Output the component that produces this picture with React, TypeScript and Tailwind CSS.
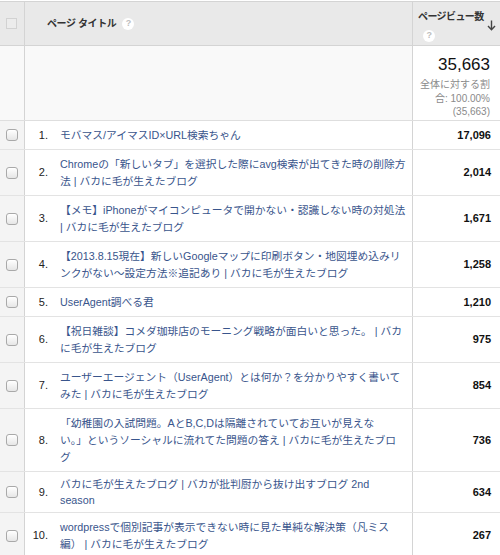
import React from 'react';

type Row = { no: number; lines: string[]; views: string; tight?: boolean };

const rows: Row[] = [
    { no: 1, lines: ['モバマス/アイマスID×URL検索ちゃん'], views: '17,096' },
    { no: 2, lines: ['Chromeの「新しいタブ」を選択した際にavg検索が出てきた時の削除方', '法 | バカに毛が生えたブログ'], views: '2,014' },
    { no: 3, lines: ['【メモ】iPhoneがマイコンピュータで開かない・認識しない時の対処法', '| バカに毛が生えたブログ'], views: '1,671' },
    { no: 4, lines: ['【2013.8.15現在】新しいGoogleマップに印刷ボタン・地図埋め込みリ', 'ンクがない～設定方法※追記あり | バカに毛が生えたブログ'], views: '1,258' },
    { no: 5, lines: ['UserAgent調べる君'], views: '1,210' },
    { no: 6, lines: ['【祝日雑談】コメダ珈琲店のモーニング戦略が面白いと思った。 | バカ', 'に毛が生えたブログ'], views: '975' },
    { no: 7, lines: ['ユーザーエージェント（UserAgent）とは何か？を分かりやすく書いて', 'みた | バカに毛が生えたブログ'], views: '854' },
    { no: 8, lines: ['「幼稚園の入試問題。AとB,C,Dは隔離されていてお互いが見えな', 'い。」というソーシャルに流れてた問題の答え | バカに毛が生えたブロ', 'グ'], views: '736' },
    { no: 9, lines: ['バカに毛が生えたブログ | バカが批判厨から抜け出すブログ 2nd', 'season'], views: '634', tight: true },
    { no: 10, lines: ['wordpressで個別記事が表示できない時に見た単純な解決策（凡ミス', '編） | バカに毛が生えたブログ'], views: '267' },
];

const Help: React.FC = () => (
    <span className="inline-flex h-[12px] w-[12px] items-center justify-center rounded-full bg-white text-[9px] font-bold leading-none text-[#bdbdbd]">?</span>
);

const Check: React.FC<{ header?: boolean }> = ({ header }) =>
    header ? (
        <span className="block h-[11px] w-[11px] border border-[#d2d2d2] bg-[#ececec]" />
    ) : (
        <span className="block h-[12px] w-[12px] rounded-[3px] border border-[#a9a9a9] bg-gradient-to-b from-white to-[#e6e6e6] shadow-[inset_0_1px_0_#fff]" />
    );

const App: React.FC = () => {
    return (
        <div className="h-[555px] w-[500px] overflow-hidden bg-white pt-px text-[11px] text-[#222]" style={{ fontFamily: '"Liberation Sans", "Noto Sans CJK JP", sans-serif' }}>
            {/* header */}
            <div className="flex h-[45px] border-y border-[#d4d4d4] bg-[#e9e9e9]">
                <div className="flex w-[25px] shrink-0 items-center justify-center border-r border-[#d4d4d4] pr-px">
                    <Check header />
                </div>
                <div className="flex flex-1 items-center gap-[6px] pl-[22px] text-[10px] font-bold tracking-[-0.4px] text-[#333]">
                    <span>ページ タイトル</span>
                    <Help />
                </div>
                <div className="relative w-[88px] shrink-0 border-l border-[#d4d4d4] pl-[5px] pt-[8px] text-[10px] font-bold tracking-[-0.6px] text-[#333]">
                    <div className="leading-[14px]">ページビュー数</div>
                    <div className="mt-[3px] pl-[5px]"><Help /></div>
                    <svg className="absolute right-[4px] top-[18px]" width="9" height="11" viewBox="0 0 9 11">
                        <path d="M4.5 0.5v9M1 6l3.5 3.8L8 6" fill="none" stroke="#444" strokeWidth="1.4" />
                    </svg>
                </div>
            </div>

            {/* summary */}
            <div className="flex h-[75px] border-b border-[#dedede] bg-[#f9f9f9]">
                <div className="w-[25px] shrink-0 border-r border-[#d4d4d4]" />
                <div className="flex-1" />
                <div className="w-[88px] shrink-0 border-l border-[#d4d4d4] bg-white pr-[10px] pt-[9px] text-right">
                    <div className="text-[17px] leading-[20px] text-[#111]">35,663</div>
                    <div className="mt-[3px] text-[10px] leading-[13.5px] text-[#8a8a8a]">
                        <div>全体に対する割</div>
                        <div>合: 100.00%</div>
                        <div>(35,663)</div>
                    </div>
                </div>
            </div>

            {/* rows */}
            {rows.map(r => (
                <div key={r.no} className="flex border-b border-[#e3e3e3]">
                    <div className="flex w-[25px] shrink-0 items-center justify-center border-r border-[#d4d4d4] bg-[#f4f4f4] pr-px">
                        <Check />
                    </div>
                    <div className="flex w-[28px] shrink-0 items-center justify-end pr-[5px] text-[#222]">{r.no}.</div>
                    <div className={`flex-1 pl-[7px] text-[10.75px] text-[#39558c] ${r.tight ? 'py-[4px] leading-[16px]' : 'py-[5.5px] leading-[17px]'}`}>
                        {r.lines.map((l, i) => (
                            <div key={i} className="whitespace-nowrap">{l}</div>
                        ))}
                    </div>
                    <div className="flex w-[88px] shrink-0 items-center justify-end border-l border-[#d4d4d4] pr-[9px] font-bold text-[#111]">{r.views}</div>
                </div>
            ))}
        </div>
    );
};

export default App;
